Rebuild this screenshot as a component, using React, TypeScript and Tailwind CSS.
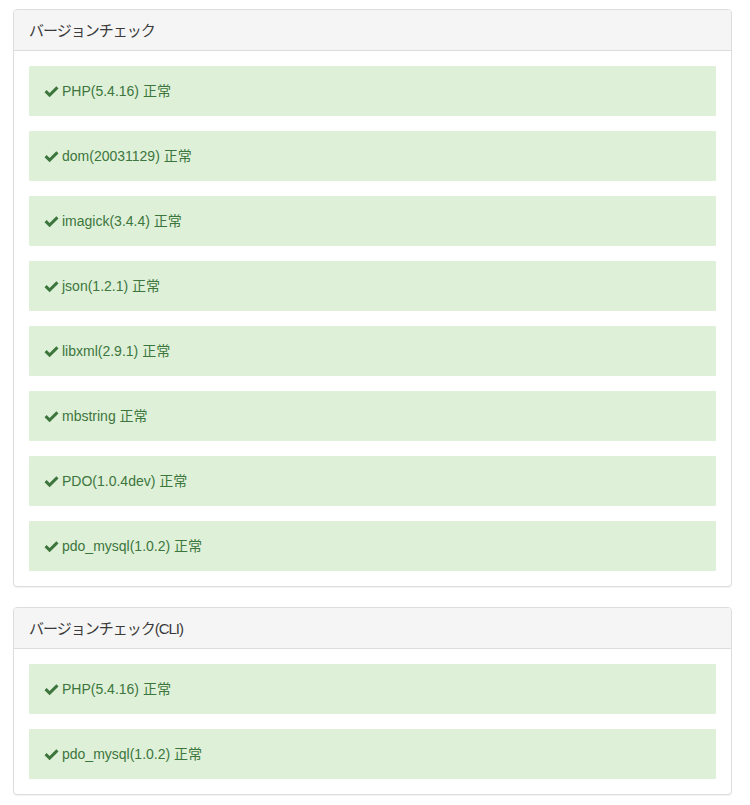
const panels = [
  {
    title: "バージョンチェック",
    items: [
      "PHP(5.4.16) 正常",
      "dom(20031129) 正常",
      "imagick(3.4.4) 正常",
      "json(1.2.1) 正常",
      "libxml(2.9.1) 正常",
      "mbstring 正常",
      "PDO(1.0.4dev) 正常",
      "pdo_mysql(1.0.2) 正常",
    ],
  },
  {
    title: "バージョンチェック(CLI)",
    items: ["PHP(5.4.16) 正常", "pdo_mysql(1.0.2) 正常"],
  },
];

function OkIcon() {
  return (
    <svg width="15" height="13" viewBox="0 0 15 13" className="mr-[3px] shrink-0">
      <path d="M0.5 7.2 L2.6 5.1 L5.6 8.1 L12.4 1.3 L14.5 3.4 L5.6 12.3 Z" fill="#3c763d" />
    </svg>
  );
}

export default function App() {
  return (
    <div
      className="min-h-screen bg-white pl-[13px] pr-[18px] pt-[9px] text-[14px] text-[#333]"
      style={{ fontFamily: '"Liberation Sans", "Noto Sans CJK JP", sans-serif' }}
    >
      {panels.map((panel) => (
        <div
          key={panel.title}
          className="mb-[20px] rounded-[4px] border border-[#ddd] bg-white shadow-[0_1px_1px_rgba(0,0,0,0.05)]"
        >
          <div className="flex h-[41px] items-center rounded-t-[3px] border-b border-[#ddd] bg-[#f5f5f5] px-[15px] text-[15px] leading-none tracking-[-1px] text-[#3a3a3a]">
            {panel.title}
          </div>
          <div className="flex flex-col gap-[15px] p-[15px]">
            {panel.items.map((item) => (
              <div
                key={item}
                className="flex h-[50px] items-center rounded-[1px] border border-[#dff0d8] bg-[#dff0d8] px-[14px] leading-[20px] text-[#3c763d]"
              >
                <OkIcon />
                {item}
              </div>
            ))}
          </div>
        </div>
      ))}
    </div>
  );
}
